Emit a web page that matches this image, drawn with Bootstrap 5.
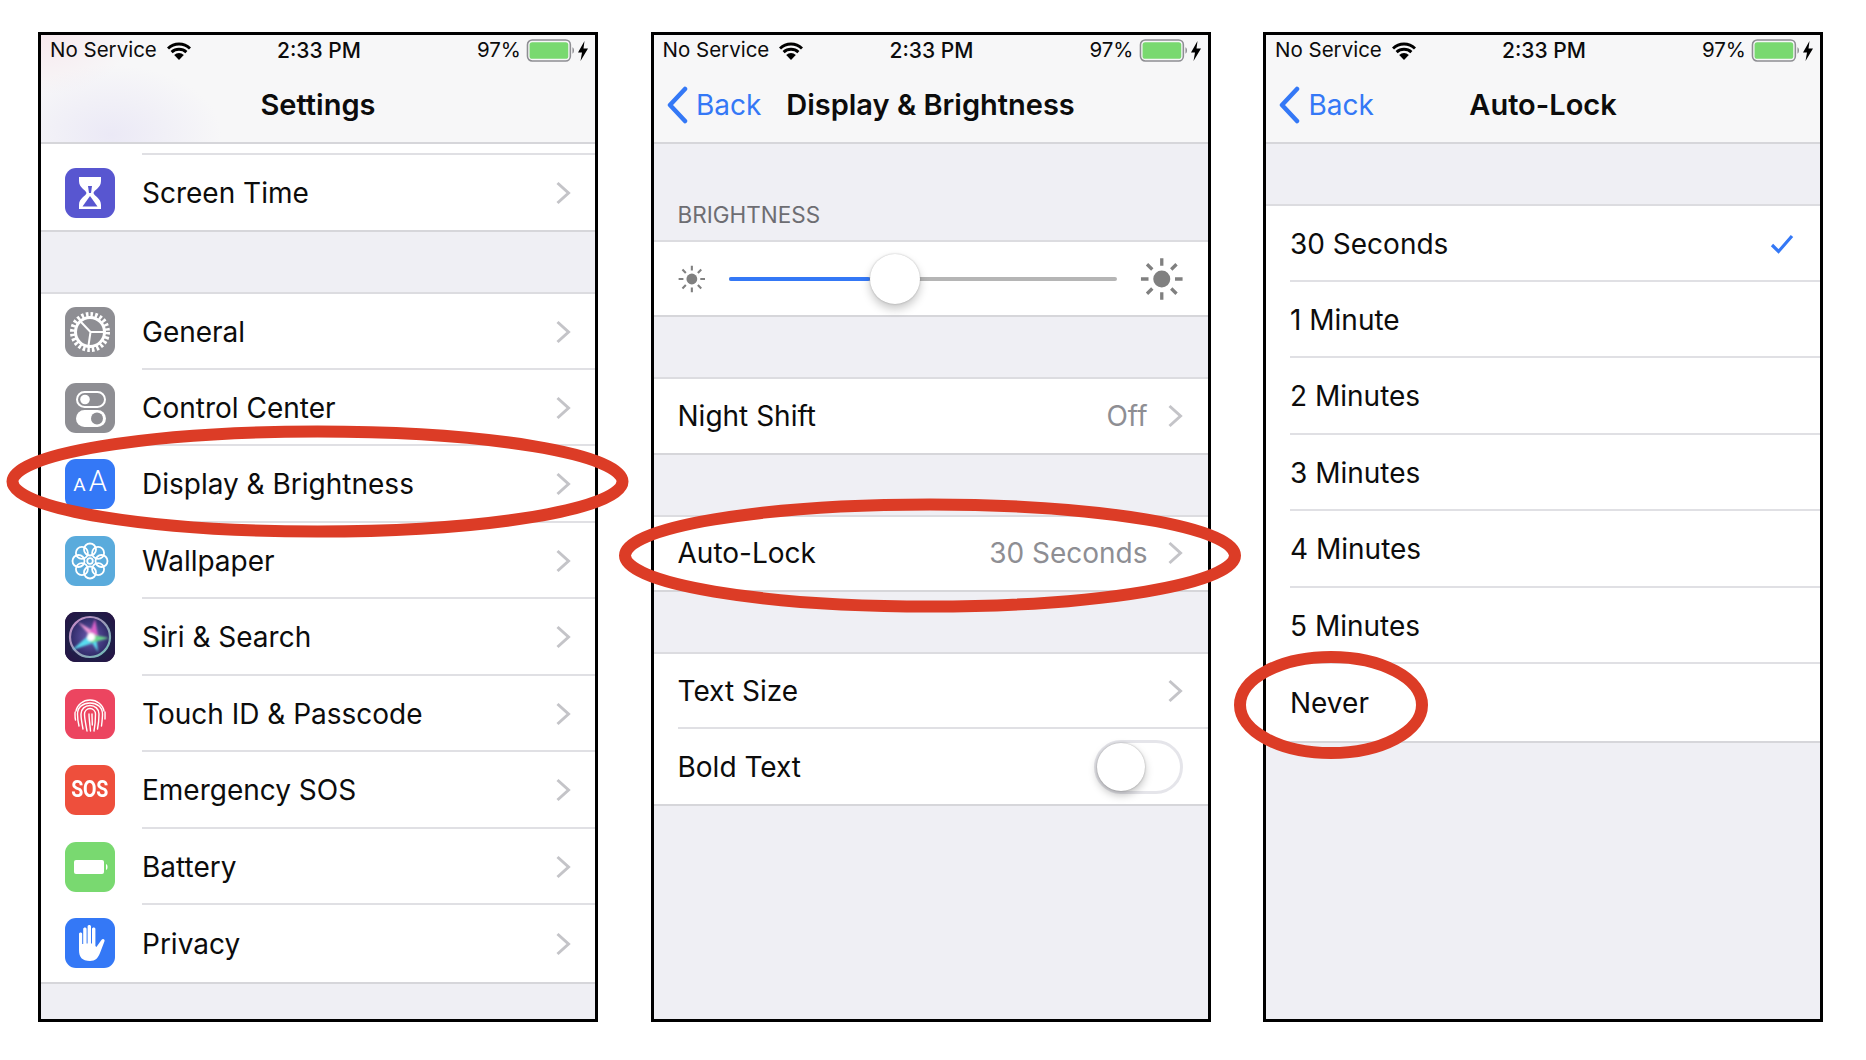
<!DOCTYPE html>
<html lang="en">
<head>
  <meta charset="UTF-8">
  <title>Auto-Lock settings</title>
  <link rel="stylesheet" href="https://cdn.jsdelivr.net/npm/bootstrap@5.3.0/dist/css/bootstrap.min.css">
  <style>
    body { background: #fff; font-family: Inter, "Liberation Sans", sans-serif; color: #0c0c0c; margin: 0; }
    .stage { width: 1866px; height: 1060px; padding: 32px 0 0 38px; gap: 52.5px; }
    .phone { width: 560px; height: 990px; border: 3px solid #000; background: #efeff4; overflow: hidden; flex: none; }
    .hdr { height: 109px; background: #f7f7f8; border-bottom: 2px solid #d6d6da; }
    .hdr-tint { background: radial-gradient(ellipse 110px 70px at 70px 100px, #ebe9f6, transparent), radial-gradient(ellipse 90px 60px at 0 0, #f7e9ee, transparent), #f7f7f8; }
    .sbar { height: 29px; padding: 0 7px 0 9px; font-size: 20.5px; display: grid; grid-template-columns: 1fr auto 1fr; align-items: center; }
    .sbar-time { font-weight: 500; font-size: 21px; }
    .sbar-right { gap: 5px; }
    .bolt-tuck { margin-left: -3px; }
    .wifi-gap { margin-left: 10px; }
    .navline { height: 78px; padding: 4px 12px 0; display: grid; grid-template-columns: 1fr auto 1fr; align-items: center; }
    .navtitle { font-size: 29px; font-weight: 600; }
    .backlink { color: #3478f6; font-size: 28px; gap: 8.5px; }
    .grp { background: #fff; border-top: 2px solid #dcdce0; border-bottom: 2px solid #d6d6da; }
    .grp-flush { border-top: 0; }
    .gap-60 { margin-top: 60px; }
    .sliver { height: 11px; margin-left: 101px; border-bottom: 2px solid #e0e0e4; }
    .rw { height: 76.5px; padding-left: 24px; font-size: 28px; }
    .rw-first { height: 75px; }
    .rw-plain { height: 73.5px; }
    .rw-short { height: 75px; }
    .rw-list .rw:first-child { height: 75.5px; }
    .rw-list .rw-body { padding-top: 2px; }
    .ico { width: 50px; height: 50px; border-radius: 11px; margin-right: 27px; flex: none; }
    .ico svg { display: block; }
    .rw-body { height: 100%; padding-right: 24px; border-bottom: 2px solid #e0e0e4; }
    .rw:last-child .rw-body { border-bottom: 0; }
    .phone-text .rw-body { padding-right: 25px; }
    .rw-val { color: #8e8e93; margin-right: 19px; }
    .check-pad { margin-right: 1px; }
    .sect-head { height: 96px; padding: 0 0 8px 24px; font-size: 22.5px; color: #6d6d72; }
    .slider-row { height: 73px; padding: 0 24px; }
    .track { height: 4px; width: 392px; margin: 0 23px 0 24px; background: #b5b5b5; border-radius: 2px; }
    .track-fill { width: 141px; height: 4px; background: #3478f6; border-radius: 2px; }
    .thumb { width: 50px; height: 50px; top: -23px; left: 141px; border-radius: 50%; background: #fff; box-shadow: 0 5px 10px rgba(0,0,0,.22), 0 0 2px rgba(0,0,0,.25); }
    .switch { width: 89px; height: 54px; border: 3px solid #e5e5ea; border-radius: 27px; }
    .knob { width: 48px; height: 48px; left: 0; top: 0; border-radius: 50%; background: #fff; box-shadow: 0 4px 8px rgba(0,0,0,.25), 0 0 2px rgba(0,0,0,.3); }
    .c-purple { background: #5856d0; }
    .c-gray { background: #8e8e93; }
    .c-blue { background: #3478f6; }
    .c-sky { background: #5aabdc; }
    .c-siri { background: #1a1a3c; }
    .c-pink { background: #ec4560; }
    .c-red { background: #ee4f3c; }
    .c-green { background: #79d970; }
    .aa-wrap { color: #fff; font-family: Roboto, sans-serif; font-weight: 300; line-height: 1; }
    .aa-small { font-size: 19px; margin-right: 3px; font-weight: 400; }
    .aa-big { font-size: 29px; }
    .sos { color: #fff; font-family: Roboto, sans-serif; font-weight: 700; }
    .sos-txt { font-size: 23px; transform: scaleX(.85); letter-spacing: -.3px; }
    .marks { left: 0; top: 0; pointer-events: none; }
  </style>
</head>
<body>
  <svg width="0" height="0" class="position-absolute">
    <defs>
      <symbol id="wifi" viewBox="0 0 24 18"><path d="M1 6.500a16 16 0 0 1 22 0M4.600 10.200a11 11 0 0 1 14.800 0" fill="none" stroke="#000" stroke-width="3"/><path d="M12 18L7.200 13a7 7 0 0 1 9.600 0z" fill="#000"/></symbol>
      <symbol id="batt" viewBox="0 0 47 22"><rect x="1" y="1" width="41" height="20" rx="4.500" fill="none" stroke="#8e8e93" stroke-width="1.500"/><rect x="3" y="3" width="37" height="16" rx="2.500" fill="#79d970"/><path d="M44 8c2 .5 2 5.500 0 6z" fill="#8e8e93"/></symbol>
      <symbol id="bolt" viewBox="0 0 10 20"><path d="M6.500 0L0 11.500h4L2.500 20 10 7.500H5.500z" fill="#000"/></symbol>
      <symbol id="chev" viewBox="0 0 16 24"><path d="M2.500 2l11 10-11 10" fill="none" stroke="#c4c4c8" stroke-width="3"/></symbol>
      <symbol id="back" viewBox="0 0 22 38"><path d="M19 3L4 19l15 16" fill="none" stroke="#3478f6" stroke-width="4.500" stroke-linecap="round" stroke-linejoin="round"/></symbol>
      <symbol id="sun" viewBox="0 0 46 46"><circle cx="23" cy="23" r="9" fill="#808080"/><path d="M23 1v8M23 37v8M1 23h8M37 23h8M7.400 7.400l5.600 5.600M33 33l5.600 5.600M38.600 7.400L33 13M13 33l-5.600 5.600" stroke="#808080" stroke-width="3.500"/></symbol>
    </defs>
  </svg>

  <div class="stage d-flex position-relative">

    <!-- SETTINGS -->
    <div class="phone">
      <div class="hdr hdr-tint">
        <div class="sbar">
          <div class="d-flex align-items-center">No Service<svg class="wifi-gap" width="24" height="18"><use href="#wifi"/></svg></div>
          <div class="sbar-time">2:33 PM</div>
          <div class="sbar-right d-flex align-items-center justify-content-end">97%<svg width="50" height="23"><use href="#batt"/></svg><svg class="bolt-tuck" width="10" height="20"><use href="#bolt"/></svg></div>
        </div>
        <div class="navline"><div></div><div class="navtitle">Settings</div><div></div></div>
      </div>

      <div class="grp grp-flush">
        <div class="sliver"></div>
        <div class="rw rw-first d-flex align-items-center">
          <div class="ico c-purple"><svg width="50" height="50" viewBox="0 0 50 50"><path d="M14 9h22v4c0 7-7 9-7.500 12 .5 3 7.500 5 7.500 12v4H14v-4c0-7 7-9 7.500-12-.5-3-7.500-5-7.500-12z" fill="#fff"/><path d="M23 18h4l-1 7h-2z" fill="#5856d0"/><path d="M25 28l7.500 10.500h-15z" fill="#5856d0"/></svg></div>
          <div class="rw-body flex-grow-1 d-flex align-items-center justify-content-between">Screen Time<svg width="16" height="24"><use href="#chev"/></svg></div>
        </div>
      </div>

      <div class="grp rw-list gap-60">
        <div class="rw d-flex align-items-center">
          <div class="ico c-gray"><svg width="50" height="50" viewBox="0 0 50 50" fill="none" stroke="#fff"><circle cx="25" cy="25" r="17.500" stroke-width="5" stroke-dasharray="2.500 2.080"/><circle cx="25" cy="25" r="14.500" stroke-width="3"/><path d="M25.500 25H39M25.500 25l-2 13.500M25.500 25l-9.500-10" stroke-width="2"/></svg></div>
          <div class="rw-body flex-grow-1 d-flex align-items-center justify-content-between">General<svg width="16" height="24"><use href="#chev"/></svg></div>
        </div>
        <div class="rw d-flex align-items-center">
          <div class="ico c-gray"><svg width="50" height="50" viewBox="0 0 50 50"><rect x="12" y="9" width="28" height="15" rx="7.500" fill="none" stroke="#fff" stroke-width="2"/><circle cx="20" cy="16.500" r="4.800" fill="#fff"/><rect x="11" y="27" width="30" height="17" rx="8.500" fill="#fff"/><circle cx="32" cy="35.500" r="6" fill="#8e8e93"/></svg></div>
          <div class="rw-body flex-grow-1 d-flex align-items-center justify-content-between">Control Center<svg width="16" height="24"><use href="#chev"/></svg></div>
        </div>
        <div class="rw d-flex align-items-center">
          <div class="ico c-blue aa-wrap d-flex align-items-baseline justify-content-center pt-2"><span class="aa-small">A</span><span class="aa-big">A</span></div>
          <div class="rw-body flex-grow-1 d-flex align-items-center justify-content-between">Display &amp; Brightness<svg width="16" height="24"><use href="#chev"/></svg></div>
        </div>
        <div class="rw d-flex align-items-center">
          <div class="ico c-sky"><svg width="50" height="50" viewBox="0 0 50 50" fill="none" stroke="#fff" stroke-width="1.800"><circle cx="25" cy="25" r="2.800"/><circle cx="25" cy="13.500" r="6"/><circle cx="33.100" cy="16.900" r="6"/><circle cx="36.500" cy="25" r="6"/><circle cx="33.100" cy="33.100" r="6"/><circle cx="25" cy="36.500" r="6"/><circle cx="16.900" cy="33.100" r="6"/><circle cx="13.500" cy="25" r="6"/><circle cx="16.900" cy="16.900" r="6"/></svg></div>
          <div class="rw-body flex-grow-1 d-flex align-items-center justify-content-between">Wallpaper<svg width="16" height="24"><use href="#chev"/></svg></div>
        </div>
        <div class="rw d-flex align-items-center">
          <div class="ico c-siri overflow-hidden"><svg width="50" height="50" viewBox="0 0 50 50"><defs><radialGradient id="siriBg" cx=".5" cy=".5" r=".7"><stop offset=".5" stop-color="#1c2248"/><stop offset="1" stop-color="#2a1146"/></radialGradient><linearGradient id="siriRing" x1="0" y1="0" x2="1" y2="1"><stop offset="0" stop-color="#c88ac8"/><stop offset=".5" stop-color="#9a9ab8"/><stop offset="1" stop-color="#6fc0b8"/></linearGradient><radialGradient id="siriDisc"><stop offset="0" stop-color="#6a5ab0"/><stop offset="1" stop-color="#2e2a66"/></radialGradient><filter id="siriBlur" x="-20%" y="-20%" width="140%" height="140%"><feGaussianBlur stdDeviation=".8"/></filter></defs><rect width="50" height="50" fill="url(#siriBg)"/><circle cx="25" cy="25" r="20" fill="url(#siriDisc)" stroke="url(#siriRing)" stroke-width="2.200"/><g filter="url(#siriBlur)"><path d="M25 22L7 38l21-7zM24 26l9 14-2-16z" fill="#58dcef"/><path d="M27 26L13 10l17 10z" fill="#f09ad8"/><path d="M23 26L30 7l3 17z" fill="#d860c8"/><path d="M24 22l20 4-18 5z" fill="#69d88c"/><circle cx="26" cy="25" r="4" fill="#fff"/></g></svg></div>
          <div class="rw-body flex-grow-1 d-flex align-items-center justify-content-between">Siri &amp; Search<svg width="16" height="24"><use href="#chev"/></svg></div>
        </div>
        <div class="rw d-flex align-items-center">
          <div class="ico c-pink"><svg width="50" height="50" viewBox="0 0 50 50" fill="none" stroke="#fff" stroke-width="1.400" stroke-linecap="round"><path d="M11 22c1-6 7-11 14-11s13 5 14 11"/><path d="M10.500 31c-.5-2-.5-4-.5-6 0-1 0-1.500.2-2M40 30c0-2 .2-4 0-7"/><path d="M14 37c-1-4-1.500-8-1.500-12 0-7 5.500-11 12.500-11s12.500 4 12.500 11c0 4-.5 8-1 12"/><path d="M18 40c-1-5-2-10-2-15 0-5 4-8.500 9-8.500s9 3.500 9 8.500c0 5-.5 10-1.500 15"/><path d="M22 42c-1-6-2.500-12-2.500-17 0-3 2.500-5.500 5.500-5.500s5.500 2.500 5.500 5.500c0 6-.5 12-1.500 17"/><path d="M25.500 42c-.5-6-1.500-12-1.500-17"/><path d="M27 25c0 4 .3 7 .3 11"/></svg></div>
          <div class="rw-body flex-grow-1 d-flex align-items-center justify-content-between">Touch ID &amp; Passcode<svg width="16" height="24"><use href="#chev"/></svg></div>
        </div>
        <div class="rw d-flex align-items-center">
          <div class="ico c-red sos d-flex align-items-center justify-content-center"><span class="sos-txt">SOS</span></div>
          <div class="rw-body flex-grow-1 d-flex align-items-center justify-content-between">Emergency SOS<svg width="16" height="24"><use href="#chev"/></svg></div>
        </div>
        <div class="rw d-flex align-items-center">
          <div class="ico c-green"><svg width="50" height="50" viewBox="0 0 50 50"><rect x="9" y="18" width="30" height="14" rx="2" fill="#fff"/><path d="M41 22c2 .5 2 5.500 0 6z" fill="#fff"/></svg></div>
          <div class="rw-body flex-grow-1 d-flex align-items-center justify-content-between">Battery<svg width="16" height="24"><use href="#chev"/></svg></div>
        </div>
        <div class="rw d-flex align-items-center">
          <div class="ico c-blue"><svg width="50" height="50" viewBox="0 0 50 50"><path d="M14 16c0-2 3.200-2 3.200 0v10h1V11c0-2 3.400-2 3.400 0v14.500h1V8.500c0-2 3.400-2 3.400 0v17h1V11c0-2 3.400-2 3.400 0v17l1 1 5-7c1.400-2 4-.5 3 1.500L35 35c-2 5-4.500 8-10 8-8 0-11-4-11-11z" fill="#fff"/></svg></div>
          <div class="rw-body flex-grow-1 d-flex align-items-center justify-content-between">Privacy<svg width="16" height="24"><use href="#chev"/></svg></div>
        </div>
      </div>
    </div>

    <!-- DISPLAY & BRIGHTNESS -->
    <div class="phone phone-text">
      <div class="hdr">
        <div class="sbar">
          <div class="d-flex align-items-center">No Service<svg class="wifi-gap" width="24" height="18"><use href="#wifi"/></svg></div>
          <div class="sbar-time">2:33 PM</div>
          <div class="sbar-right d-flex align-items-center justify-content-end">97%<svg width="50" height="23"><use href="#batt"/></svg><svg class="bolt-tuck" width="10" height="20"><use href="#bolt"/></svg></div>
        </div>
        <div class="navline">
          <div class="backlink d-flex align-items-center"><svg width="22" height="38"><use href="#back"/></svg>Back</div>
          <div class="navtitle">Display &amp; Brightness</div>
          <div></div>
        </div>
      </div>

      <div class="sect-head d-flex align-items-end">BRIGHTNESS</div>
      <div class="grp">
        <div class="slider-row d-flex align-items-center">
          <svg width="28" height="28"><use href="#sun"/></svg>
          <div class="track position-relative"><div class="track-fill"></div><div class="thumb position-absolute"></div></div>
          <svg width="44" height="44"><use href="#sun"/></svg>
        </div>
      </div>

      <div class="grp gap-60">
        <div class="rw rw-plain d-flex align-items-center">
          <div class="rw-body flex-grow-1 d-flex align-items-center"><span class="flex-grow-1">Night Shift</span><span class="rw-val">Off</span><svg width="16" height="24"><use href="#chev"/></svg></div>
        </div>
      </div>

      <div class="grp gap-60">
        <div class="rw rw-plain d-flex align-items-center">
          <div class="rw-body flex-grow-1 d-flex align-items-center"><span class="flex-grow-1">Auto-Lock</span><span class="rw-val">30 Seconds</span><svg width="16" height="24"><use href="#chev"/></svg></div>
        </div>
      </div>

      <div class="grp gap-60">
        <div class="rw rw-short d-flex align-items-center">
          <div class="rw-body flex-grow-1 d-flex align-items-center justify-content-between">Text Size<svg width="16" height="24"><use href="#chev"/></svg></div>
        </div>
        <div class="rw rw-short d-flex align-items-center">
          <div class="rw-body flex-grow-1 d-flex align-items-center justify-content-between">Bold Text<div class="switch position-relative"><div class="knob position-absolute"></div></div></div>
        </div>
      </div>
    </div>

    <!-- AUTO-LOCK -->
    <div class="phone phone-text">
      <div class="hdr">
        <div class="sbar">
          <div class="d-flex align-items-center">No Service<svg class="wifi-gap" width="24" height="18"><use href="#wifi"/></svg></div>
          <div class="sbar-time">2:33 PM</div>
          <div class="sbar-right d-flex align-items-center justify-content-end">97%<svg width="50" height="23"><use href="#batt"/></svg><svg class="bolt-tuck" width="10" height="20"><use href="#bolt"/></svg></div>
        </div>
        <div class="navline">
          <div class="backlink d-flex align-items-center"><svg width="22" height="38"><use href="#back"/></svg>Back</div>
          <div class="navtitle">Auto-Lock</div>
          <div></div>
        </div>
      </div>

      <div class="grp rw-list gap-60">
        <div class="rw d-flex align-items-center">
          <div class="rw-body flex-grow-1 d-flex align-items-center justify-content-between">30 Seconds<svg class="check-pad" width="24" height="20" viewBox="0 0 24 20"><path d="M2 11l6.500 6.500L22 2" fill="none" stroke="#3478f6" stroke-width="3.200"/></svg></div>
        </div>
        <div class="rw d-flex align-items-center"><div class="rw-body flex-grow-1 d-flex align-items-center">1 Minute</div></div>
        <div class="rw d-flex align-items-center"><div class="rw-body flex-grow-1 d-flex align-items-center">2 Minutes</div></div>
        <div class="rw d-flex align-items-center"><div class="rw-body flex-grow-1 d-flex align-items-center">3 Minutes</div></div>
        <div class="rw d-flex align-items-center"><div class="rw-body flex-grow-1 d-flex align-items-center">4 Minutes</div></div>
        <div class="rw d-flex align-items-center"><div class="rw-body flex-grow-1 d-flex align-items-center">5 Minutes</div></div>
        <div class="rw d-flex align-items-center"><div class="rw-body flex-grow-1 d-flex align-items-center">Never</div></div>
      </div>
    </div>

    <!-- red hand-drawn rings lie over the phones -->
    <svg class="marks position-absolute" width="1866" height="1060" fill="none" stroke="#dc3c26" stroke-width="12">
      <ellipse cx="317.500" cy="481.500" rx="305" ry="50"/>
      <ellipse cx="930" cy="555.500" rx="305" ry="51"/>
      <ellipse cx="1331" cy="705" rx="91" ry="48"/>
    </svg>
  </div>
  <script src="https://cdn.jsdelivr.net/npm/bootstrap@5.3.0/dist/js/bootstrap.bundle.min.js"></script>
</body>
</html>
